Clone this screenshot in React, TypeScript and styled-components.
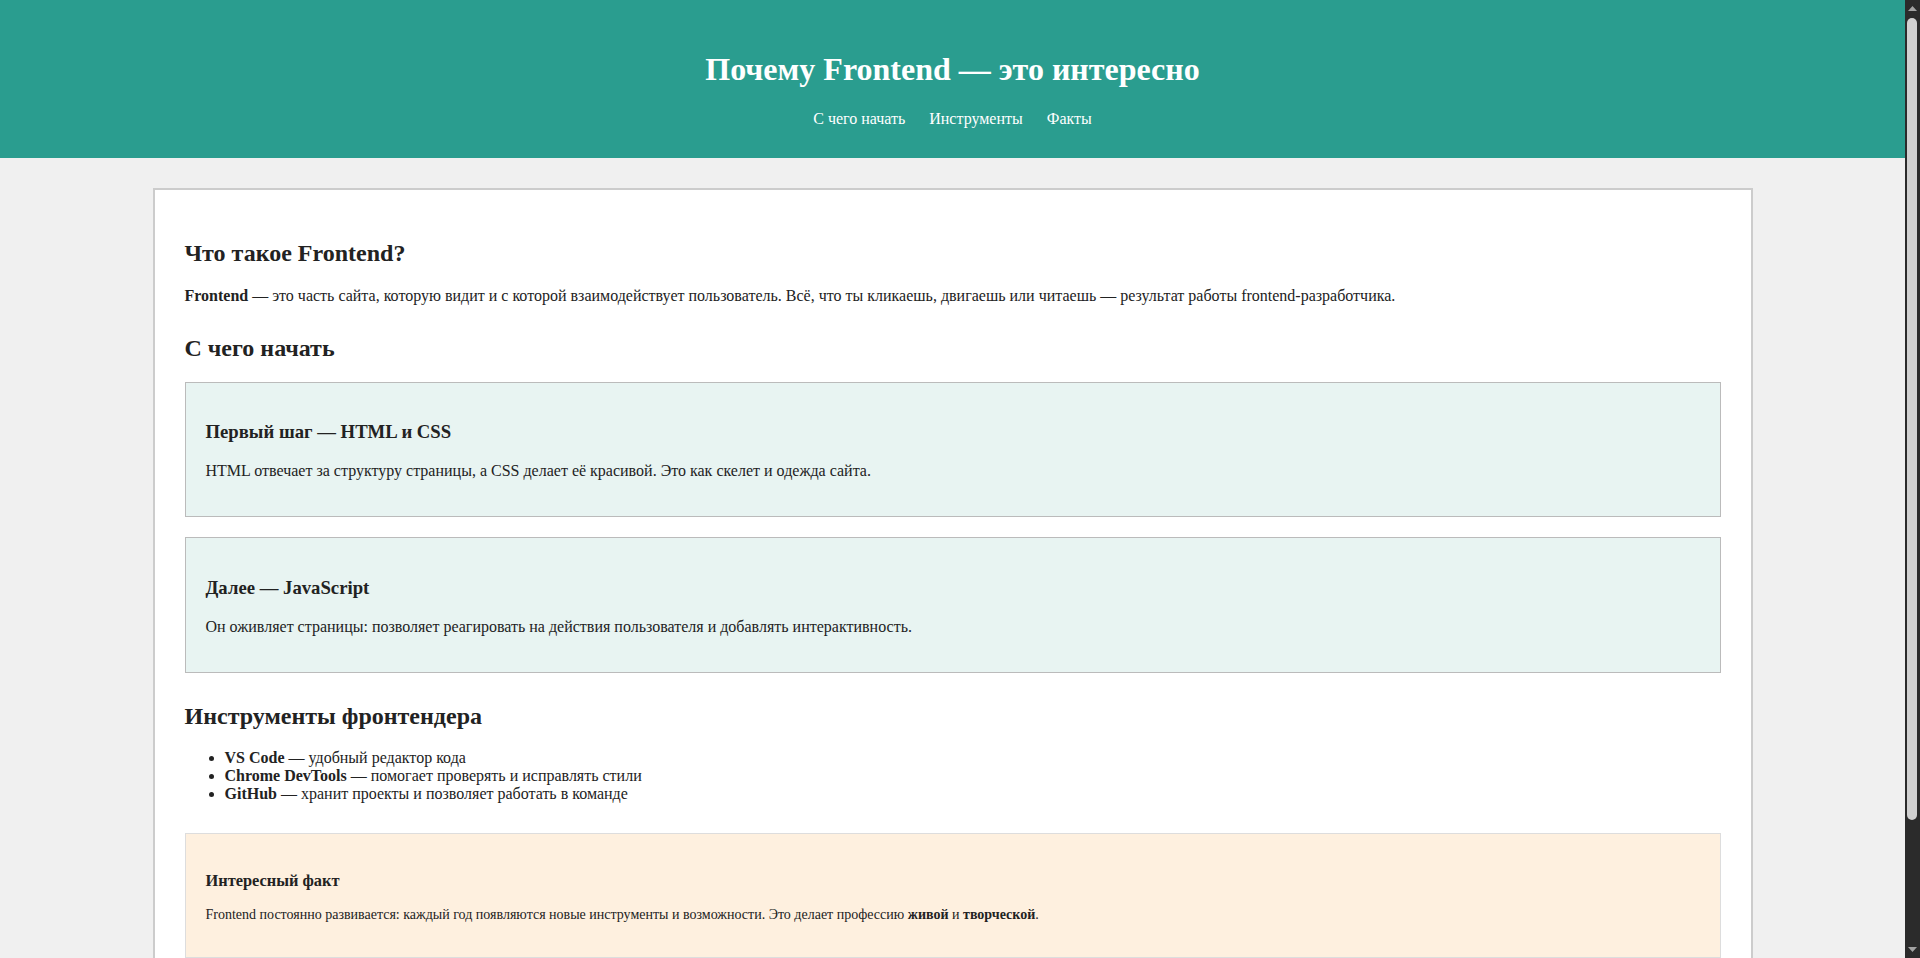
import React from "react";
import styled, { createGlobalStyle } from "styled-components";

const GlobalStyle = createGlobalStyle`
  html, body {
    margin: 0;
    padding: 0;
  }
  body {
    background: #f0f0f0;
    color: #222;
    font-family: "Liberation Serif", "Times New Roman", serif;
    font-size: 16px;
    padding-right: 15px;
  }
  * { box-sizing: border-box; }
`;

const Header = styled.header`
  background: #2a9d8f;
  color: #fff;
  text-align: center;
  padding: 30px 20px;
`;

const Title = styled.h1`
  font-size: 32px;
  font-weight: bold;
  margin: 0.67em 0;
`;

const Nav = styled.nav`
  display: flex;
  justify-content: center;
  gap: 24px;
`;

const NavLink = styled.a`
  color: #fff;
  text-decoration: none;
  font-size: 16px;
`;

const Main = styled.main`
  max-width: 1600px;
  margin: 30px auto;
  background: #fff;
  border: 2px solid #ccc;
  padding: 30px;
`;

const Section = styled.section`
  margin-bottom: 30px;
`;

const H2 = styled.h2`
  font-size: 24px;
  margin: 0.83em 0;
`;

const Text = styled.p`
  margin: 1em 0;
  line-height: normal;
`;

const Card = styled.div<{ $variant?: "step" | "fact" }>`
  margin: 20px 0;
  padding: 20px;
  background: ${(p) => (p.$variant === "fact" ? "#fef0df" : "#e8f4f2")};
  border: 1px solid ${(p) => (p.$variant === "fact" ? "#ddd" : "#bbb")};
  font-size: ${(p) => (p.$variant === "fact" ? "14px" : "16px")};
`;

const H3 = styled.h3`
  font-size: 1.17em;
  margin: 1em 0;
`;

const List = styled.ul`
  margin: 1em 0;
  padding-left: 40px;
`;

const Item = styled.li`
  line-height: normal;
`;

/* Browser window scrollbar (drawn over the page's right edge) */
const ScrollRail = styled.div`
  position: fixed;
  top: 0;
  right: 0;
  width: 15px;
  height: 100vh;
  background: #2b2b2b;
  display: flex;
  flex-direction: column;
  align-items: center;
`;

const ScrollArrow = styled.div`
  height: 17px;
  width: 15px;
  flex: none;
  display: flex;
  align-items: center;
  justify-content: center;
`;

const ScrollTrack = styled.div`
  flex: 1;
  width: 15px;
  display: flex;
  justify-content: center;
  padding-top: 1px;
`;

const ScrollThumb = styled.div`
  width: 10px;
  height: 802px;
  margin-left: -1px;
  background: #d1d1d1;
  border-radius: 5px;
`;

function Scrollbar() {
  return (
    <ScrollRail aria-hidden="true">
      <ScrollArrow>
        <svg width="9" height="5" viewBox="0 0 9 5">
          <polygon points="0,5 4.5,0 9,5" fill="#a3a3a3" />
        </svg>
      </ScrollArrow>
      <ScrollTrack>
        <ScrollThumb />
      </ScrollTrack>
      <ScrollArrow>
        <svg width="9" height="5" viewBox="0 0 9 5">
          <polygon points="0,0 4.5,5 9,0" fill="#a3a3a3" />
        </svg>
      </ScrollArrow>
    </ScrollRail>
  );
}

export default function App() {
  return (
    <>
      <GlobalStyle />
      <Header>
        <Title>Почему Frontend — это интересно</Title>
        <Nav>
          <NavLink href="#start">С чего начать</NavLink>
          <NavLink href="#tools">Инструменты</NavLink>
          <NavLink href="#facts">Факты</NavLink>
        </Nav>
      </Header>
      <Main>
        <Section>
          <H2>Что такое Frontend?</H2>
          <Text>
            <strong>Frontend</strong> — это часть сайта, которую видит и с которой взаимодействует
            пользователь. Всё, что ты кликаешь, двигаешь или читаешь — результат работы
            frontend-разработчика.
          </Text>
        </Section>
        <Section id="start">
          <H2>С чего начать</H2>
          <Card $variant="step">
            <H3>Первый шаг — HTML и CSS</H3>
            <Text>
              HTML отвечает за структуру страницы, а CSS делает её красивой. Это как скелет и одежда
              сайта.
            </Text>
          </Card>
          <Card $variant="step">
            <H3>Далее — JavaScript</H3>
            <Text>
              Он оживляет страницы: позволяет реагировать на действия пользователя и добавлять
              интерактивность.
            </Text>
          </Card>
        </Section>
        <Section id="tools">
          <H2>Инструменты фронтендера</H2>
          <List>
            <Item>
              <strong>VS Code</strong> — удобный редактор кода
            </Item>
            <Item>
              <strong>Chrome DevTools</strong> — помогает проверять и исправлять стили
            </Item>
            <Item>
              <strong>GitHub</strong> — хранит проекты и позволяет работать в команде
            </Item>
          </List>
        </Section>
        <Section id="facts">
          <Card $variant="fact">
            <H3>Интересный факт</H3>
            <Text>
              Frontend постоянно развивается: каждый год появляются новые инструменты и возможности.
              Это делает профессию <strong>живой</strong> и <strong>творческой</strong>.
            </Text>
          </Card>
        </Section>
      </Main>
      <Scrollbar />
    </>
  );
}
